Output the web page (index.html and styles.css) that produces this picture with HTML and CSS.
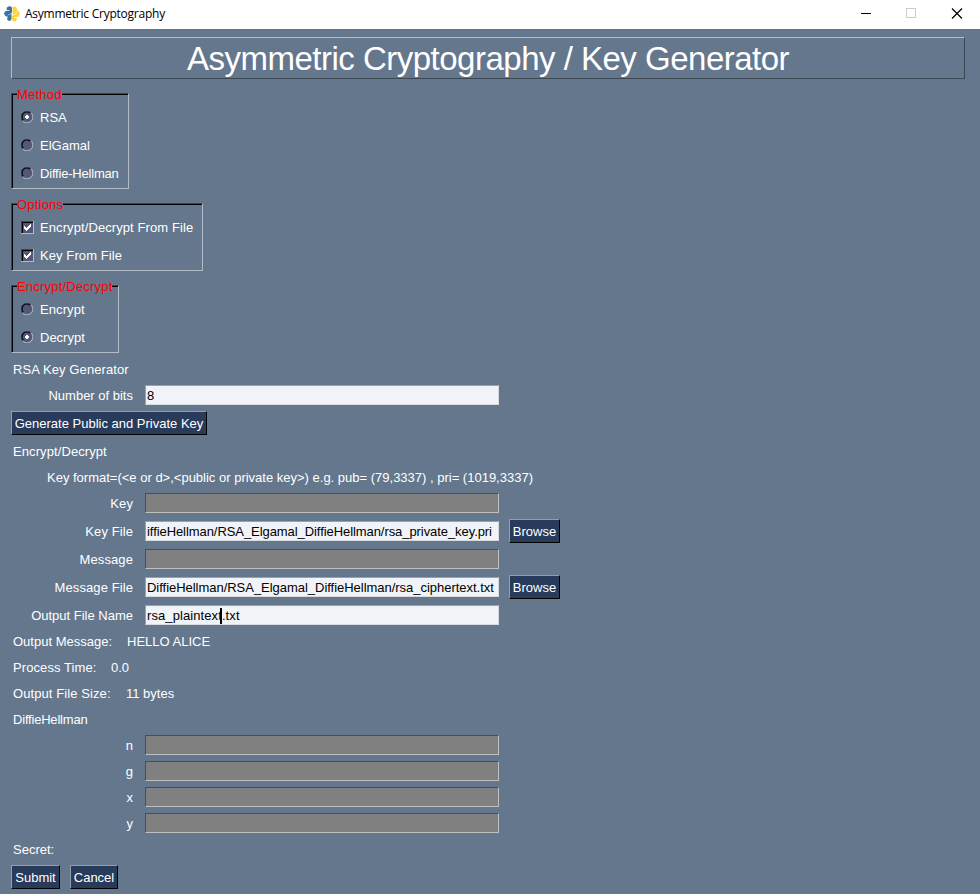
FILE: index.html
```html
<!DOCTYPE html>
<html lang="en">
<head>
<meta charset="utf-8">
<title>Asymmetric Cryptography</title>
<link rel="stylesheet" href="styles.css">
</head>
<body>
<svg width="0" height="0" class="defs">
  <symbol id="radio" viewBox="0 0 12 12">
    <circle cx="6" cy="6" r="5" fill="#54567a"/>
    <path d="M1.8 10.2A5.9 5.9 0 0 1 10.2 1.8" fill="none" stroke="#3c4754"/>
    <path d="M2.4 9.2A4.8 4.8 0 0 1 9.2 2.4" fill="none" stroke="#000" stroke-width="1.1"/>
    <path d="M10.2 1.8A5.7 5.7 0 0 1 1.8 10.2" fill="none" stroke="#b2bbc6"/>
  </symbol>
  <symbol id="dot" viewBox="0 0 12 12"><path d="M5 4h2v1h1v2h-1v1h-2v-1h-1v-2h1z" fill="#fff"/></symbol>
  <symbol id="check" viewBox="0 0 13 13" shape-rendering="crispEdges">
    <path d="M0 0h13v13h-13z" fill="#b2bbc6"/><path d="M0 0h12v12h-12z" fill="#3c4754"/><path d="M1 1h11v11h-11z" fill="#000"/><path d="M2 2h10v10h-10z" fill="#54567a"/>
    <path d="M3 5h1v1h1v1h1v-1h1v-1h1v-1h1v-1h1v3h-1v1h-1v1h-1v1h-1v1h-1v-1h-1v-1h-1z" fill="#fff"/>
  </symbol>
</svg>
<header class="titlebar">
  <svg class="logo" viewBox="0 0 16 16">
    <path d="M3 1.500Q5.500-.8 8 1.500V6Q8 8 5.500 8Q3.500 8.500 3.500 11Q0 10 .2 7Q.5 5 3 4.700H5.500V4H3Q2.300 2.500 3 1.500Z" fill="#3572a5"/>
    <path d="M4 9.500Q5 8.300 7.500 8V13Q6 16.500 3 13.500Z" fill="#3572a5"/>
    <path d="M8.500 1.500Q11-.8 13 2.500V6Q12 8 9 8.500L8.500 8Z" fill="#ffd43b"/>
    <path d="M13 4.500Q16 5 15.800 8.500Q15 11 13 11.300H10V12H13Q12.500 15.800 10 15.500Q8 15 8 13V10.500Q8.500 8.700 11 8.500Q13 8 13 6Z" fill="#ffd43b"/>
  </svg>
  <span class="caption">Asymmetric Cryptography</span>
  <svg class="controls" width="102" height="12" viewBox="0 0 102 12" shape-rendering="crispEdges">
    <path d="M0 5.500h10" stroke="#000"/><path d="M45.500 .5h9v9h-9z" fill="none" stroke="#ccc"/><path d="M91 .5l10 10M101 .5l-10 10" stroke="#000" shape-rendering="auto" stroke-width="1.200"/>
  </svg>
</header>
<main>
  <h1>Asymmetric Cryptography / Key Generator</h1>
  <section class="frame method"><h2>Method</h2>
    <label><svg><use href="#radio"/><use href="#dot"/></svg>RSA</label>
    <label><svg><use href="#radio"/></svg>ElGamal</label>
    <label class="tight"><svg><use href="#radio"/></svg>Diffie-Hellman</label>
  </section>
  <section class="frame options"><h2>Options</h2>
    <label class="loose"><svg class="box"><use href="#check"/></svg>Encrypt/Decrypt From File</label>
    <label class="loose"><svg class="box"><use href="#check"/></svg>Key From File</label>
  </section>
  <section class="frame mode"><h2>Encrypt/Decrypt</h2>
    <label class="loose"><svg><use href="#radio"/></svg>Encrypt</label>
    <label><svg><use href="#radio"/><use href="#dot"/></svg>Decrypt</label>
  </section>
  <div class="row text loose">RSA Key Generator</div>
  <div class="row"><span class="name">Number of bits</span><div class="field">8</div></div>
  <div class="row tall"><button class="generate">Generate Public and Private Key</button></div>
  <div class="row text loose">Encrypt/Decrypt</div>
  <div class="row text hint">Key format=(&lt;e or d&gt;,&lt;public or private key&gt;) e.g. pub= (79,3337) , pri= (1019,3337)</div>
  <div class="row"><span class="name loose">Key</span><div class="field off"></div></div>
  <div class="row tall"><span class="name loose">Key File</span><div class="field path1">iffieHellman/RSA_Elgamal_DiffieHellman/rsa_private_key.pri</div><button class="browse">Browse</button></div>
  <div class="row"><span class="name loose">Message</span><div class="field off"></div></div>
  <div class="row tall"><span class="name loose">Message File</span><div class="field path2">DiffieHellman/RSA_Elgamal_DiffieHellman/rsa_ciphertext.txt</div><button class="browse">Browse</button></div>
  <div class="row"><span class="name">Output File Name</span><div class="field loose">rsa_plaintext<i class="caret"></i>.txt</div></div>
  <div class="row text"><span class="k1">Output Message:</span><span>HELLO ALICE</span></div>
  <div class="row text"><span class="k2 loose">Process Time:</span><span>0.0</span></div>
  <div class="row text"><span class="k3 loose">Output File Size:</span><span>11 bytes</span></div>
  <div class="row text tight">DiffieHellman</div>
  <div class="row"><span class="name">n</span><div class="field off"></div></div>
  <div class="row"><span class="name">g</span><div class="field off"></div></div>
  <div class="row"><span class="name">x</span><div class="field off"></div></div>
  <div class="row"><span class="name">y</span><div class="field off"></div></div>
  <div class="row text">Secret:</div>
  <div class="row tall"><button class="submit">Submit</button><button class="cancel">Cancel</button></div>
</main>
</body>
</html>
```
FILE: styles.css
```css
* { box-sizing: border-box; }
body { margin: 0; width: 980px; height: 894px; overflow: hidden; background: #64778d; color: #fff; font: 13px/16px "Liberation Sans", Arial, sans-serif; }
.defs { position: absolute; }
.titlebar { height: 29px; background: #fff; color: #000; display: flex; align-items: center; padding: 0 17px 2px 4px; }
.logo { width: 16px; height: 16px; margin-right: 5px; }
.caption { font: 12px/16px "Open Sans", sans-serif; letter-spacing: -0.24px; }
.controls { margin-left: auto; }
main { padding: 8px 15px 0 11px; }
h1 { margin: 0 0 14px; height: 42px; border: 1px solid; border-color: #b2bbc6 #3c4754 #3c4754 #b2bbc6; font-size: 33px; line-height: 42px; letter-spacing: -0.5px; font-weight: normal; text-align: center; white-space: nowrap; }
.frame { border: 1px solid; border-color: #3c4754 #b2bbc6 #b2bbc6 #3c4754; box-shadow: inset 1px 1px #000; padding-left: 8px; margin-bottom: 14px; }
.frame h2 { width: max-content; height: 9px; margin: -1px 0 0 -3px; font-size: 13px; line-height: 3px; font-weight: normal; color: #f00; background: #64778d; letter-spacing: 0.2px; }
.frame label { display: flex; align-items: center; height: 28px; padding-top: 4px; }
.frame svg { width: 12px; height: 12px; margin: 0 7px 2px 1px; }
.frame svg.box { width: 13px; height: 13px; margin-right: 6px; }
.method { width: 118px; height: 96px; }
.options { width: 192px; height: 68px; }
.mode { width: 108px; height: 68px; margin-bottom: 3px; }
.row { display: flex; align-items: center; height: 26px; white-space: nowrap; }
.tall { height: 30px; }
.text { padding: 2px 0 0 2px; }
.hint { padding-left: 36px; }
.name { width: 122px; margin-right: 12px; padding-top: 2px; text-align: right; }
.loose { letter-spacing: 0.09px; }
.tight { letter-spacing: -0.2px; }
.field { width: 354px; height: 20px; padding-left: 1px; line-height: 20px; color: #000; background: #f0f3f7; border: 1px solid; border-color: #a0a0a0 #d8dadd #d8dadd #a0a0a0; overflow: hidden; }
.path1 { letter-spacing: -0.07px; }
.path2 { letter-spacing: -0.03px; }
.off { background: #808080; border-color: #4d4d4d #c0c0c0 #c0c0c0 #4d4d4d; }
.caret { display: inline-block; width: 2px; height: 16px; margin: -2px 0 0 -2px; background: #000; vertical-align: middle; }
button { height: 24px; padding: 2px 0 0; border: 1px solid; border-color: #939dad #000 #000 #939dad; background: #283b5b; color: #fff; font: inherit; }
.generate { width: 196px; }
.browse { width: 51px; margin-left: 10px; }
.submit { width: 49px; margin-right: 10px; }
.cancel { width: 48px; }
.k1 { width: 114px; }
.k2 { width: 98px; }
.k3 { width: 113px; }
```
